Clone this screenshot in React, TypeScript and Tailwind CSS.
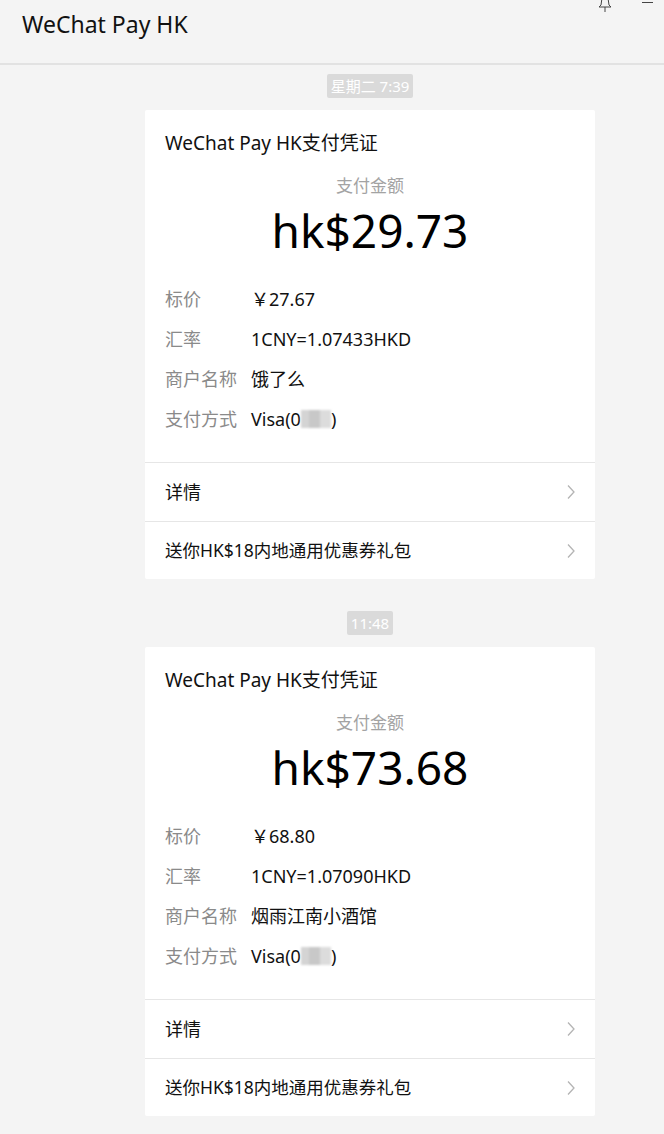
import React from "react";

interface Receipt {
    time: string;
    amount: string;
    price: string;
    rate: string;
    merchant: string;
}

const receipts: Receipt[] = [
    {time: "星期二 7:39", amount: "hk$29.73", price: "27.67", rate: "1CNY=1.07433HKD", merchant: "饿了么"},
    {time: "11:48", amount: "hk$73.68", price: "68.80", rate: "1CNY=1.07090HKD", merchant: "烟雨江南小酒馆"},
];

const font = {fontFamily: '"Noto Sans", "Noto Sans CJK SC", sans-serif'};

const Chevron = () => (
    <svg width="10" height="16" viewBox="0 0 10 16" fill="none">
        <path d="M2 1.5 L8 8 L2 14.5" stroke="#b4b4b4" strokeWidth="1.3" />
    </svg>
);

// blurred card digits
const Masked = () => (
    <span className="inline-flex h-[18px] w-[30px] translate-y-[2px] blur-[1px]">
        <span className="h-full w-[8px] bg-[#d4d4d4]" />
        <span className="h-full w-[11px] bg-[#c8c8c8]" />
        <span className="h-full w-[11px] bg-[#dcdcdc]" />
    </span>
);

const Row = ({label, children}: {label: string; children: React.ReactNode}) => (
    <div className="flex h-[40px] items-center text-[18px]">
        <span className="w-[86px] text-[#8a8a8a]">{label}</span>
        <span className="text-[#111]">{children}</span>
    </div>
);

const ReceiptCard = ({r}: {r: Receipt}) => (
    <div className="w-[450px] rounded-[2px] bg-white">
        <div className="px-[20px] pt-[20px] pb-[23px]">
            <div className="text-[19px] leading-[26px] text-[#111]">WeChat Pay HK支付凭证</div>
            <div className="mt-[18px] text-center text-[17px] leading-[24px] text-[#a3a3a3]">支付金额</div>
            <div className="mt-[4px] text-center text-[46px] leading-[56px] text-black">{r.amount}</div>
            <div className="mt-[21px]">
                <Row label="标价">￥{r.price}</Row>
                <Row label="汇率">{r.rate}</Row>
                <Row label="商户名称">{r.merchant}</Row>
                <Row label="支付方式">
                    Visa(0<Masked />)
                </Row>
            </div>
        </div>
        <div className="flex h-[59px] items-center justify-between border-t border-[#e6e6e6] pl-[20px] pr-[19px] text-[18px] text-[#111]">
            <span>详情</span>
            <Chevron />
        </div>
        <div className="flex h-[58px] items-center justify-between border-t border-[#e6e6e6] pl-[20px] pr-[19px] text-[17.5px] text-[#111]">
            <span>送你HK$18内地通用优惠券礼包</span>
            <Chevron />
        </div>
    </div>
);

export default function App() {
    return (
        <div className="min-h-[1134px] w-[664px] bg-[#f4f4f4]" style={font}>
            {/* header */}
            <div className="relative h-[65px] border-b-2 border-[#e2e2e2]">
                <div className="pl-[22px] pt-[8px] text-[23px] leading-[32px] text-[#111]">WeChat Pay HK</div>
                <svg className="absolute right-[52px] top-0" width="14" height="12" viewBox="0 0 14 12" fill="none">
                    <path d="M4 -2 L3 5 L1 7 L13 7 L11 5 L10 -2" stroke="#444" strokeWidth="1" />
                    <path d="M7 7 L7 12" stroke="#444" strokeWidth="1" />
                </svg>
                <div className="absolute right-[11px] top-[2px] h-px w-[11px] bg-[#444]" />
            </div>

            {/* messages */}
            <div className="ml-[145px] flex w-[450px] flex-col items-center pt-[9px]">
                {receipts.map((r, i) => (
                    <React.Fragment key={i}>
                        <div className={`${i > 0 ? "mt-[32px]" : ""} rounded-[2px] bg-[#dadada] px-[4px] text-[15px] leading-[24px] text-white`}>
                            {r.time}
                        </div>
                        <div className="mt-[12px]">
                            <ReceiptCard r={r} />
                        </div>
                    </React.Fragment>
                ))}
            </div>
        </div>
    );
}
